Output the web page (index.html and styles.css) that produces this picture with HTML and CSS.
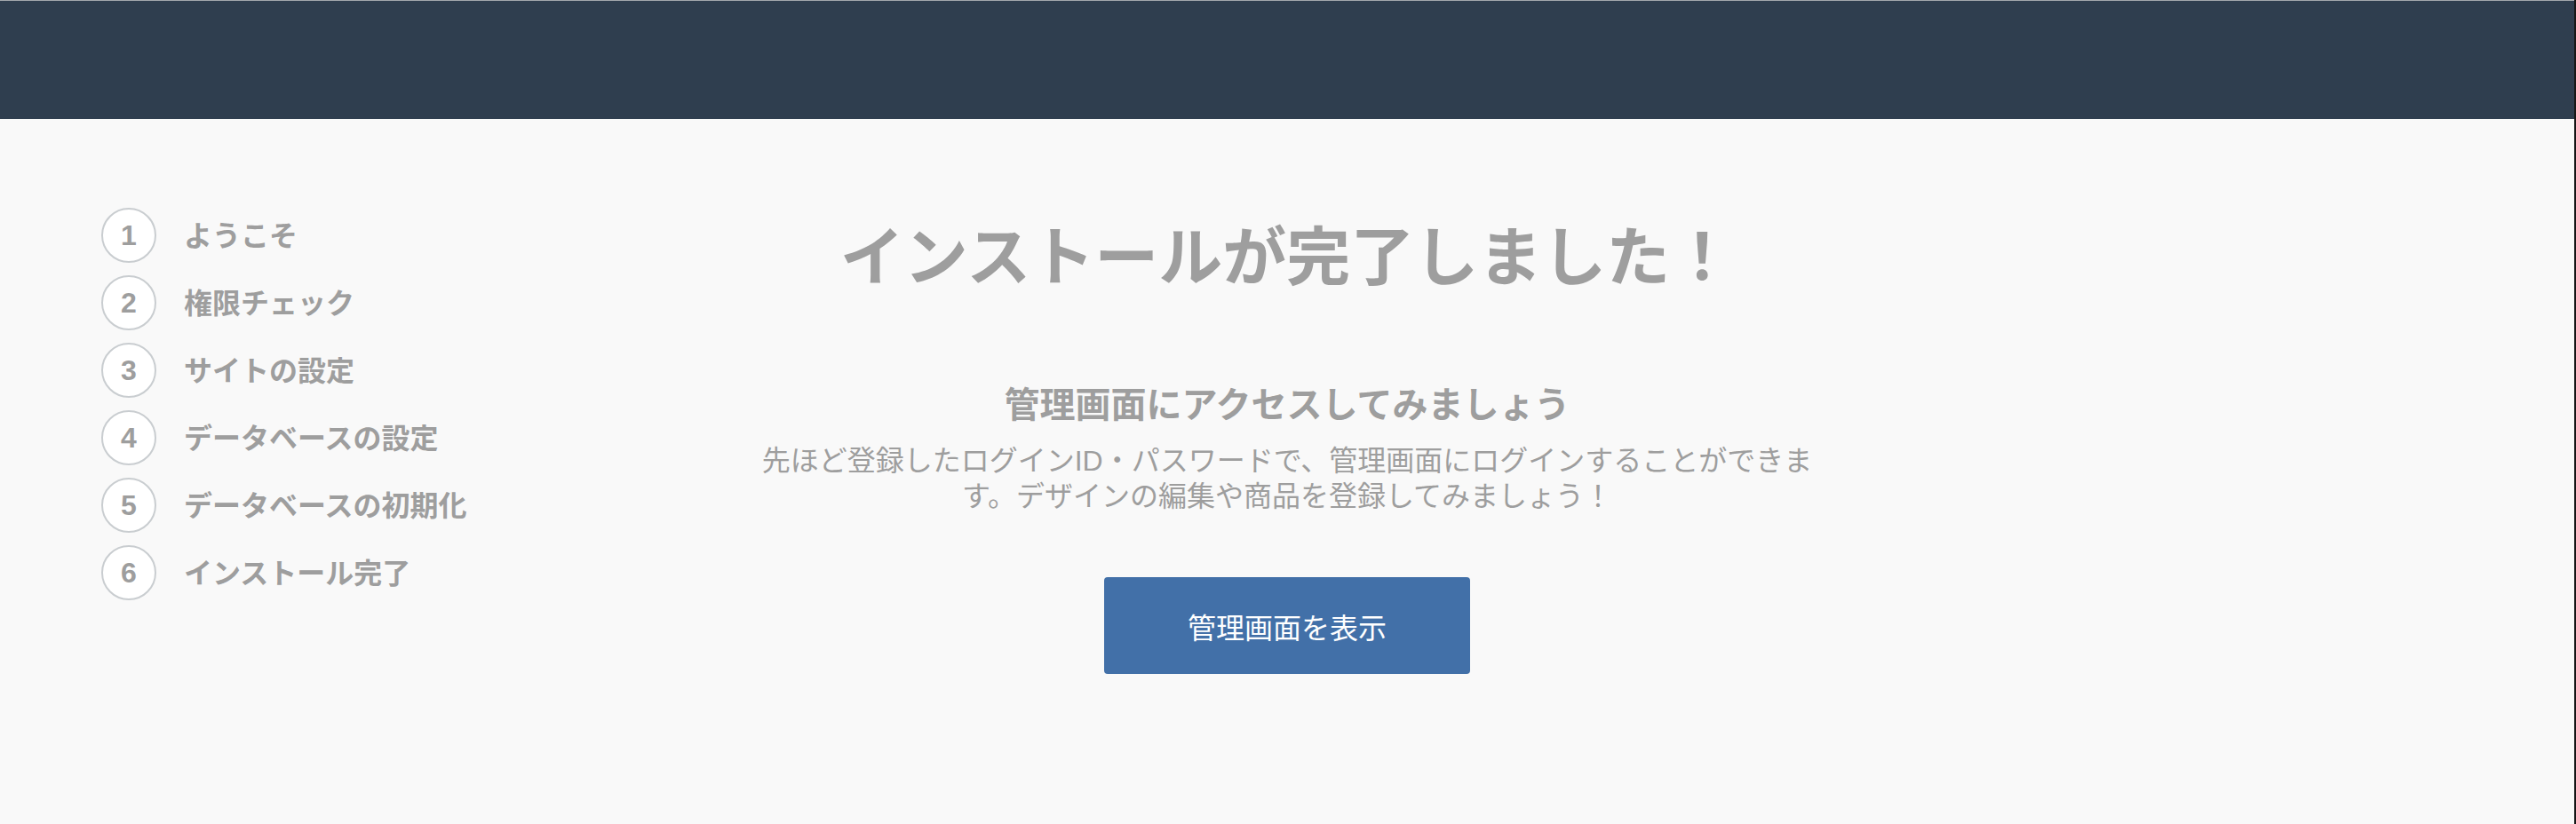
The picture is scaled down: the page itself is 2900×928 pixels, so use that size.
FILE: index.html
```html
<!DOCTYPE html>
<html lang="ja">
<head>
<meta charset="utf-8">
<title>インストール完了</title>
<link rel="stylesheet" href="styles.css">
</head>
<body>
<div class="page">
  <div class="app">
    <header class="topbar"></header>
    <div class="content">
      <nav class="steps">
        <div class="step"><span class="num">1</span><span class="label">ようこそ</span></div>
        <div class="step"><span class="num">2</span><span class="label">権限チェック</span></div>
        <div class="step"><span class="num">3</span><span class="label">サイトの設定</span></div>
        <div class="step"><span class="num">4</span><span class="label">データベースの設定</span></div>
        <div class="step"><span class="num">5</span><span class="label">データベースの初期化</span></div>
        <div class="step"><span class="num">6</span><span class="label">インストール完了</span></div>
      </nav>
      <main class="main">
        <h1 class="title">インストールが完了しました！</h1>
        <h2 class="subtitle">管理画面にアクセスしてみましょう</h2>
        <p class="desc">先ほど登録したログインID・パスワードで、管理画面にログインすることができます。デザインの編集や商品を登録してみましょう！</p>
        <a class="btn" href="#">管理画面を表示</a>
      </main>
    </div>
  </div>
  <div class="edge"></div>
</div>
</body>
</html>
```
FILE: styles.css
```css
html, body {
  margin: 0;
  padding: 0;
  height: 928px;
  overflow: hidden;
}
body {
  background: #f9f9f9;
  font-family: "Liberation Sans", "Noto Sans CJK JP", sans-serif;
  color: #9e9e9e;
}
.page {
  display: flex;
  height: 928px;
}
.app {
  flex: 1;
  display: flex;
  flex-direction: column;
  min-width: 0;
}
.edge {
  width: 2px;
  background: #161616;
}
.topbar {
  height: 133px;
  border-top: 1px solid #a3a8ad;
  background: #2f3e4f;
  flex: none;
}
.content {
  flex: 1;
  display: grid;
  grid-template-columns: 1fr 1196px 1fr;
  align-items: start;
  padding-top: 100px;
}
.steps {
  grid-column: 1;
  display: flex;
  flex-direction: column;
  gap: 14px;
  padding-left: 114px;
}
.step {
  display: flex;
  align-items: center;
  gap: 31px;
  height: 62px;
}
.num {
  flex: none;
  width: 58px;
  height: 58px;
  border: 2px solid #c9cdd0;
  border-radius: 50%;
  background: #ffffff;
  display: flex;
  align-items: center;
  justify-content: center;
  font-family: "Liberation Sans", sans-serif;
  font-weight: bold;
  font-size: 32px;
  color: #9e9e9e;
}
.label {
  font-weight: bold;
  font-size: 32px;
  white-space: nowrap;
  color: #9e9e9e;
  padding-bottom: 4px;
}
.main {
  grid-column: 2;
  text-align: center;
  display: flex;
  flex-direction: column;
  align-items: center;
}
.title {
  margin: 13px 0 0;
  font-size: 72px;
  line-height: 86px;
  font-weight: bold;
  color: #9e9e9e;
}
.subtitle {
  margin: 99px 0 0;
  font-size: 40px;
  line-height: 48px;
  font-weight: bold;
  color: #9e9e9e;
}
.desc {
  margin: 19px 0 0;
  font-size: 32px;
  line-height: 40px;
  color: #9e9e9e;
}
.btn {
  margin-top: 71px;
  width: 412px;
  height: 109px;
  border-radius: 4px;
  background: #4270a8;
  color: #ffffff;
  font-size: 32px;
  text-decoration: none;
  display: flex;
  align-items: center;
  justify-content: center;
}
```
